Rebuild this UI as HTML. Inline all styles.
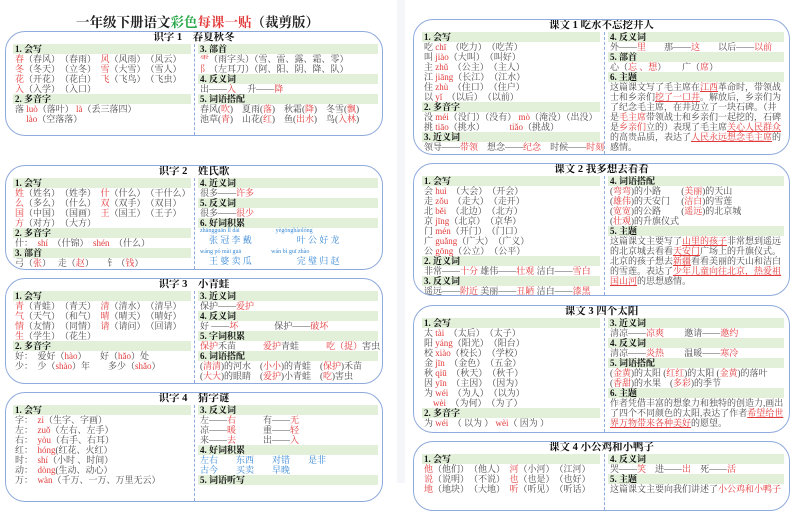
<!DOCTYPE html>
<html><head><meta charset="utf-8"><style>
*{margin:0;padding:0;box-sizing:border-box}
body{width:800px;height:483px;overflow:hidden;background:#fff;font-family:"Liberation Serif","Noto Serif CJK SC",serif;font-size:9px;color:#4a4a4a;position:relative}
.c{position:absolute;border:1.5px solid #8faadc;border-radius:20px;overflow:hidden;background:#fff}
.t{position:absolute;left:0;right:0;top:0;height:12px;line-height:12px;text-align:center;font-weight:bold;font-size:10.5px;color:#111}
.col{position:absolute;top:12px}
.dv{position:absolute;top:12px;bottom:0;border-left:1px dashed #8faadc}
.h{background:#e2efd9;height:10px;line-height:10px;font-weight:bold;color:#111;padding-left:2px}
.ln{height:10px;line-height:10px;white-space:nowrap;padding-left:2px}
.r{color:#e23a3a}.b{color:#3a8ad6}
.u{text-decoration:underline}
.w{white-space:normal;line-height:10px;padding-left:2px}
#tt{position:absolute;left:0;width:395px;top:11px;text-align:center;font-weight:bold;font-size:13.5px;color:#222}
#sep{position:absolute;left:397px;top:0;bottom:0;width:8px;background:#f4f6fa}
</style></head><body>
<div id="tt">一年级下册语文<span style="color:#2aa84a">彩色</span><span class="r">每课一贴</span>（裁剪版）</div>
<div id="sep"></div>

<div class="c" style="left:5px;top:31px;width:378px;height:105px">
<div class="t">识字 1　春夏秋冬</div><div class="dv" style="left:188px"></div>
<div class="col" style="left:7px;width:178px">
<div class="h">1. 会写</div>
<div class="ln"><span class="r">春</span>（春风）　（春雨）　<span class="r">风</span>（风雨）　（风云）</div>
<div class="ln"><span class="r">冬</span>（冬天）　（立冬）　<span class="r">雪</span>（大雪）　（雪人）</div>
<div class="ln"><span class="r">花</span>（开花）　（花白）　<span class="r">飞</span>（飞鸟）　（飞虫）</div>
<div class="ln"><span class="r">入</span>（入学）　（入口）</div>
<div class="h">2. 多音字</div>
<div class="ln">落 <span class="r">luò</span>（落叶） <span class="r">là</span>（丢三落四）</div>
<div class="ln">　 <span class="r">lào</span>（空落落）</div>
</div>
<div class="col" style="left:192px;width:180px">
<div class="h">3. 部首</div>
<div class="ln"><span class="r">⻗</span>（雨字头）（雪、雷、露、霜、零）</div>
<div class="ln"><span class="r">阝</span>（左耳刀）（阿、阳、阴、降、队）</div>
<div class="h">4. 反义词</div>
<div class="ln">出——<span class="r">入</span>　 升——<span class="r">降</span></div>
<div class="h">5. 词语搭配</div>
<div class="ln">春风(<span class="r">吹</span>)　夏雨(<span class="r">落</span>)　秋霜(<span class="r">降</span>)　冬雪(<span class="r">飘</span>)</div>
<div class="ln">池草(<span class="r">青</span>)　山花(<span class="r">红</span>)　鱼(<span class="r">出水</span>)　鸟(<span class="r">入林</span>)</div>
</div></div>

<div class="c" style="left:5px;top:165px;width:378px;height:105px">
<div class="t">识字 2　姓氏歌</div><div class="dv" style="left:188px"></div>
<div class="col" style="left:7px;width:178px">
<div class="h">1. 会写</div>
<div class="ln"><span class="r">姓</span>（姓名）　（姓李）　<span class="r">什</span>（什么）　（干什么）</div>
<div class="ln"><span class="r">么</span>（多么）　（什么）　<span class="r">双</span>（双手）　（双目）</div>
<div class="ln"><span class="r">国</span>（中国）　（国画）　<span class="r">王</span>（国王）　（王子）</div>
<div class="ln"><span class="r">方</span>（对方）　（大方）</div>
<div class="h">2. 多音字</div>
<div class="ln">什：　<span class="r">shí</span>　（什锦）　<span class="r">shén</span>　（什么）</div>
<div class="h">3. 部首</div>
<div class="ln">弓（<span class="r">张</span>）　 走（<span class="r">赵</span>）　　钅（<span class="r">钱</span>）</div>
</div>
<div class="col" style="left:192px;width:180px">
<div class="h">4. 近义词</div>
<div class="ln">很多——<span class="r">许多</span></div>
<div class="h">5. 反义词</div>
<div class="ln">很多——<span class="r">很少</span></div>
<div class="h">6. 好词积累</div>
<div class="ln b" style="font-size:6px;height:7px;line-height:7px">zhāngguān lǐ dài　　　　　　yègōnghàolóng</div>
<div class="ln b">　张 冠 李 戴　　　　　叶 公 好 龙</div>
<div class="ln b" style="font-size:6px;height:8px;line-height:8px;margin-top:3px">wáng pó mài guā　　　　　wán bì guī zhào</div>
<div class="ln b">　王 婆 卖 瓜　　　　　完 璧 归 赵</div>
</div></div>

<div class="c" style="left:5px;top:278px;width:378px;height:106px">
<div class="t">识字 3　小青蛙</div><div class="dv" style="left:188px"></div>
<div class="col" style="left:7px;width:178px">
<div class="h">1. 会写</div>
<div class="ln"><span class="r">青</span>（青蛙）　（青天）　<span class="r">清</span>（清水）　（清早）</div>
<div class="ln"><span class="r">气</span>（天气）　（和气）　<span class="r">晴</span>（晴天）　（晴好）</div>
<div class="ln"><span class="r">情</span>（友情）　（同情）　<span class="r">请</span>（请问）　（回请）</div>
<div class="ln"><span class="r">生</span>（学生）　（花生）</div>
<div class="h">2. 多音字</div>
<div class="ln">好：　爱好（<span class="r">hào</span>）　　好（<span class="r">hǎo</span>）处</div>
<div class="ln">少：　少（<span class="r">shào</span>）年　　多少（<span class="r">shǎo</span>）</div>
</div>
<div class="col" style="left:192px;width:180px">
<div class="h">3. 近义词</div>
<div class="ln">保护——<span class="r">爱护</span></div>
<div class="h">4. 反义词</div>
<div class="ln">好 ——<span class="r">坏</span>　　　　保护——<span class="r">破坏</span></div>
<div class="h">5. 字词积累</div>
<div class="ln"><span class="r">保护</span>禾苗　　　<span class="r">爱护</span>青蛙　　　<span class="r">吃（捉）</span>害虫</div>
<div class="h">6. 词语搭配</div>
<div class="ln">(<span class="r">清清</span>)的河水　(<span class="r">小小</span>)的青蛙　(<span class="r">保护</span>)禾苗</div>
<div class="ln">(<span class="r">大大</span>)的眼睛　(<span class="r">爱护</span>)小青蛙　(<span class="r">吃</span>)害虫</div>
</div></div>

<div class="c" style="left:5px;top:392px;width:378px;height:110px">
<div class="t">识字 4　猜字谜</div><div class="dv" style="left:188px"></div>
<div class="col" style="left:7px;width:178px">
<div class="h">1. 会写</div>
<div class="ln">字：　<span class="r">zì</span>（生字、字画）</div>
<div class="ln">左：　<span class="r">zuǒ</span>（左右、左手）</div>
<div class="ln">右：　<span class="r">yòu</span>（右手、右耳）</div>
<div class="ln">红：　<span class="r">hóng</span>(红花、火红）</div>
<div class="ln">时：　<span class="r">shí</span>（小时 、时间）</div>
<div class="ln">动：　<span class="r">dòng</span>(生动、动心）</div>
<div class="ln">万：　<span class="r">wàn</span>（千万、一万、万里无云）</div>
</div>
<div class="col" style="left:192px;width:180px">
<div class="h">3. 反义词</div>
<div class="ln">左——<span class="r">右</span>　　　有——<span class="r">无</span></div>
<div class="ln">凉——<span class="r">暖</span>　　　重——<span class="r">轻</span></div>
<div class="ln">来——<span class="r">去</span>　　　出——<span class="r">入</span></div>
<div class="h">4. 好词积累</div>
<div class="ln b">左右　　东西　　对错　　是非</div>
<div class="ln b">古今　　买卖　　早晚</div>
<div class="h">5. 词语听写</div>
</div></div>

<div class="c" style="left:413px;top:19px;width:377px;height:136px">
<div class="t">课文 1 吃水不忘挖井人</div><div class="dv" style="left:190px"></div>
<div class="col" style="left:8px;width:178px">
<div class="h">1. 会写</div>
<div class="ln">吃 <span class="r">chī</span>　（吃力）　（吃苦）</div>
<div class="ln">叫 <span class="r">jiào</span>（大叫）　（叫好）</div>
<div class="ln">主 <span class="r">zhǔ</span>　（公主）　（主人）</div>
<div class="ln">江 <span class="r">jiāng</span>（长江）　（江水）</div>
<div class="ln">住 <span class="r">zhù</span>　（住口）　（住户）</div>
<div class="ln">以 <span class="r">yǐ</span>　（以后）　（以前）</div>
<div class="h">2. 多音字</div>
<div class="ln">没 <span class="r">méi</span>（没门）（没有） <span class="r">mò</span>（淹没）（出没）</div>
<div class="ln">挑 <span class="r">tiāo</span>（挑水）　　　 <span class="r">tiǎo</span>（挑战）</div>
<div class="h">3. 近义词</div>
<div class="ln">领导——<span class="r">带领</span>　想念——<span class="r">纪念</span>　时候——<span class="r">时刻</span></div>
</div>
<div class="col" style="left:194px;width:176px">
<div class="h">4. 反义词</div>
<div class="ln">外——<span class="r">里</span>　　那——<span class="r">这</span>　　以后——<span class="r">以前</span></div>
<div class="h">5. 部首</div>
<div class="ln">心（<span class="r">忘 、想</span>）　　 广（<span class="r">席</span>）</div>
<div class="h">6. 主题</div>
<div class="w">这篇课文写了毛主席在<span class="r u">江西</span>革命时，带领战士和乡亲们<span class="r u">挖了一口井</span>。解放后，乡亲们为了纪念毛主席，在井边立了一块石碑。（井是<span class="r">毛主席</span>带领战士和乡亲们一起挖的，石碑是<span class="r">乡亲们</span>立的）表现了毛主席<span class="r u">关心人民群众</span>的高贵品质，表达了<span class="r u">人民永远想念毛主席</span>的感情。</div>
</div></div>

<div class="c" style="left:413px;top:163px;width:377px;height:133px">
<div class="t">课文 2 我多想去看看</div><div class="dv" style="left:190px"></div>
<div class="col" style="left:8px;width:178px">
<div class="h">1. 会写</div>
<div class="ln">会 <span class="r">huì</span>　（大会）　（开会）</div>
<div class="ln">走 <span class="r">zǒu</span>　（走大）　（走开）</div>
<div class="ln">北 <span class="r">běi</span>　（北边）　（北方）</div>
<div class="ln">京 <span class="r">jīng</span>（北京）　（京华）</div>
<div class="ln">门 <span class="r">mén</span>（开门）　（门口）</div>
<div class="ln">广 <span class="r">guǎng</span>（广大）　（广义）</div>
<div class="ln">公 <span class="r">gōng</span>（公立）　（公平）</div>
<div class="h">2. 近义词</div>
<div class="ln">非常——<span class="r">十分</span> 雄伟——<span class="r">壮观</span> 洁白——<span class="r">雪白</span></div>
<div class="h">3. 反义词</div>
<div class="ln">遥远——<span class="r">附近</span> 美丽——<span class="r">丑陋</span> 洁白——<span class="r">漆黑</span></div>
</div>
<div class="col" style="left:194px;width:176px">
<div class="h">4. 词语搭配</div>
<div class="ln">(<span class="r">弯弯</span>)的小路　　 (<span class="r">美丽</span>)的天山</div>
<div class="ln">(<span class="r">雄伟</span>)的天安门　 (<span class="r">洁白</span>)的雪莲</div>
<div class="ln">(<span class="r">宽宽</span>)的公路　　 (<span class="r">遥远</span>)的北京城</div>
<div class="ln">(<span class="r">壮观</span>)的升旗仪式</div>
<div class="h">5. 主题</div>
<div class="w">这篇课文主要写了<span class="r u">山里的孩子</span>非常想到遥远的北京城去看看<span class="r u">天安门</span>广场上的升旗仪式。北京的孩子想去<span class="r u">新疆</span>看看美丽的天山和洁白的雪莲。表达了<span class="r u">少年儿童向往北京，热爱祖国山河</span>的思想感情。</div>
</div></div>

<div class="c" style="left:413px;top:305px;width:377px;height:128px">
<div class="t">课文 3 四个太阳</div><div class="dv" style="left:190px"></div>
<div class="col" style="left:8px;width:178px">
<div class="h">1. 会写</div>
<div class="ln">太 <span class="r">tài</span>　（太后）　（太子）</div>
<div class="ln">阳 <span class="r">yáng</span>（阳光）　（阳台）</div>
<div class="ln">校 <span class="r">xiào</span>（校长）　（学校）</div>
<div class="ln">金 <span class="r">jīn</span>　（金色）　（五金）</div>
<div class="ln">秋 <span class="r">qiū</span>　（秋天）　（秋千）</div>
<div class="ln">因 <span class="r">yīn</span>　（主因）　（因为）</div>
<div class="ln">为 <span class="r">wéi</span>　（为人）　（以为）</div>
<div class="ln">　<span class="r">wèi</span>　（为何）　（为了）</div>
<div class="h">2. 多音字</div>
<div class="ln">为 <span class="r">wéi</span>　（ 以为 ） <span class="r">wèi</span>（ 因为 ）</div>
</div>
<div class="col" style="left:194px;width:176px">
<div class="h">3. 近义词</div>
<div class="ln">清凉——<span class="r">凉爽</span>　　 邀请——<span class="r">邀约</span></div>
<div class="h">4. 反义词</div>
<div class="ln">清凉——<span class="r">炎热</span>　　 温暖——<span class="r">寒冷</span></div>
<div class="h">5. 词语搭配</div>
<div class="ln">(<span class="r">金黄</span>)的太阳 (<span class="r">红红</span>)的太阳 (<span class="r">金黄</span>)的落叶</div>
<div class="ln">(<span class="r">香甜</span>)的水果　(<span class="r">多彩</span>)的季节</div>
<div class="h">6. 主题</div>
<div class="w">作者凭借丰富的想象力和独特的创造力,画出了四个不同颜色的太阳,表达了作者<span class="r u">希望给世界万物带来各种美好</span>的愿望。</div>
</div></div>

<div class="c" style="left:413px;top:441px;width:377px;height:70px">
<div class="t">课文 4 小公鸡和小鸭子</div><div class="dv" style="left:190px"></div>
<div class="col" style="left:8px;width:178px">
<div class="h">1. 会写</div>
<div class="ln"><span class="r">他</span>（他们）　（他人）　<span class="r">河</span>（小河）　（江河）</div>
<div class="ln"><span class="r">说</span>（说明）　（不说）　<span class="r">也</span>（也是）　（也好）</div>
<div class="ln"><span class="r">地</span>（地块）　（大地）　<span class="r">听</span>（听见）　（听话）</div>
</div>
<div class="col" style="left:194px;width:176px">
<div class="h">4. 反义词</div>
<div class="ln">哭——<span class="r">笑</span>　进——<span class="r">出</span>　死——<span class="r">活</span></div>
<div class="h">5. 主题</div>
<div class="ln">这篇课文主要向我们讲述了<span class="r">小公鸡和小鸭子</span></div>
</div></div>
</body></html>
